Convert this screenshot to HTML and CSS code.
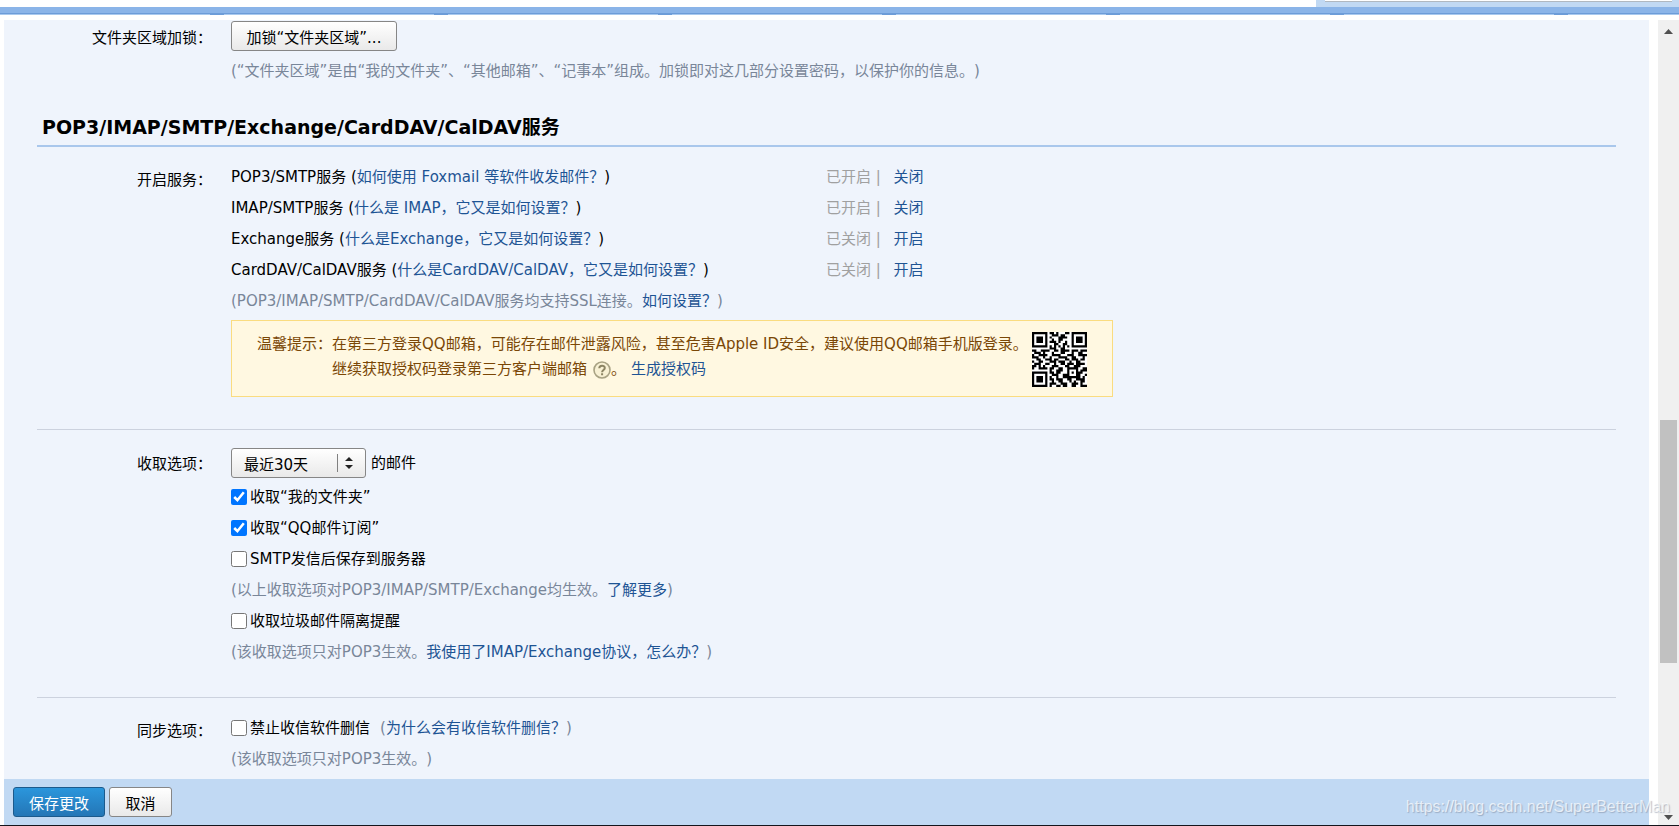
FILE: index.html
```html
<!DOCTYPE html>
<html lang="zh-CN">
<head>
<meta charset="utf-8">
<title>邮箱设置</title>
<link rel="stylesheet" href="styles.css">
</head>
<body>
<header class="topbar"><div class="searchwrap"><div class="searchbox"></div></div></header>
<div class="divider"></div>
<div class="tabs"></div>
<div class="frame">
  <main class="panel">
    <div class="settings">
      <section class="row row-lock">
        <div class="label">文件夹区域加锁：</div>
        <div class="content">
          <button class="btn lock" type="button">加锁“文件夹区域”...</button>
          <p class="line hint">(“文件夹区域”是由“我的文件夹”、“其他邮箱”、“记事本”组成。加锁即对这几部分设置密码，以保护你的信息。)</p>
        </div>
      </section>
      <h2 class="title">POP3/IMAP/SMTP/Exchange/CardDAV/CalDAV服务</h2>
      <section class="row row-services">
        <div class="label">开启服务：</div>
        <div class="content">
          <div class="line service"><span>POP3/SMTP服务 (<a href="#">如何使用 Foxmail 等软件收发邮件？</a>)</span><span class="state">已开启 | <a href="#">关闭</a></span></div>
          <div class="line service"><span>IMAP/SMTP服务 (<a href="#">什么是 IMAP，它又是如何设置？</a>)</span><span class="state">已开启 | <a href="#">关闭</a></span></div>
          <div class="line service"><span>Exchange服务 (<a href="#">什么是Exchange，它又是如何设置？</a>)</span><span class="state">已关闭 | <a href="#">开启</a></span></div>
          <div class="line service"><span>CardDAV/CalDAV服务 (<a href="#">什么是CardDAV/CalDAV，它又是如何设置？</a>)</span><span class="state">已关闭 | <a href="#">开启</a></span></div>
          <p class="line hint">(POP3/IMAP/SMTP/CardDAV/CalDAV服务均支持SSL连接。<a href="#">如何设置？</a>)</p>
          <div class="tip">
            <div>温馨提示：</div>
            <div class="tip-text">
              <div>在第三方登录QQ邮箱，可能存在邮件泄露风险，甚至危害Apple ID安全，建议使用QQ邮箱手机版登录。</div>
              <div class="tip-line">继续获取授权码登录第三方客户端邮箱
                <svg class="help" viewBox="0 0 18 18" width="18" height="18"><circle cx="9" cy="9" r="8" fill="#f8f1d4" stroke="#a8a283" stroke-width="1.600"/><path d="M6.300 7.200C6.300 3.800 11.800 3.900 11.800 7c0 2-2.700 2.100-2.700 4.200M9.100 12.300v2" fill="none" stroke="#8b8463" stroke-width="2"/></svg>。<a class="gen" href="#">生成授权码</a></div>
            </div>
            <svg class="qr" viewBox="0 0 25 25" width="55" height="55" role="img" aria-label="二维码"><path fill="#fff" d="M0 0h25v25H0z"/><path stroke="#000" d="M0 .5h7m1 0h2m1 0h1m3 0h2m1 0h7M0 1.500h1m5 0h1m2 0h3m1 0h2m3 0h1m5 0h1M0 2.500h1m1 0h3m1 0h1m1 0h1m3 0h4m2 0h1m1 0h3m1 0h1M0 3.500h1m1 0h3m1 0h1m2 0h1m2 0h2m4 0h1m1 0h3m1 0h1M0 4.500h1m1 0h3m1 0h1m1 0h3m1 0h1m2 0h1m2 0h1m1 0h3m1 0h1M0 5.500h1m5 0h1m3 0h2m2 0h2m2 0h1m5 0h1M0 6.500h7m1 0h1m1 0h1m1 0h1m1 0h1m1 0h1m1 0h7M8 7.500h3m2 0h2M0 8.500h2m2 0h4m2 0h2m1 0h4m1 0h3m1 0h3M1 9.500h3m1 0h1m3 0h1m3 0h2m3 0h1m2 0h2M0 10.500h1m2 0h4m2 0h4m3 0h3m2 0h4M0 11.500h3m2 0h1m2 0h1m3 0h4m2 0h2m3 0h1M2 12.500h2m2 0h3m1 0h2m3 0h2m1 0h3m1 0h2M0 13.500h1m2 0h2m3 0h3m1 0h3m2 0h1m2 0h2M1 14.500h3m2 0h2m2 0h1m2 0h2m1 0h3m1 0h4M0 15.500h2m1 0h1m1 0h1m3 0h3m3 0h2m2 0h3M0 16.500h1m2 0h4m1 0h2m2 0h2m2 0h5m2 0h2M8 17.500h1m2 0h3m2 0h1m3 0h1m1 0h3M0 18.500h7m1 0h2m1 0h2m3 0h1m1 0h1m1 0h3M0 19.500h1m5 0h1m2 0h3m2 0h3m3 0h2m2 0h1M0 20.500h1m1 0h3m1 0h1m1 0h1m2 0h1m2 0h8m1 0h1M0 21.500h1m1 0h3m1 0h1m1 0h2m1 0h3m2 0h2m2 0h4M0 22.500h1m1 0h3m1 0h1m2 0h1m2 0h2m3 0h1m1 0h1m2 0h2M0 23.500h1m5 0h1m1 0h3m2 0h3m2 0h3m1 0h1M0 24.500h7m1 0h1m2 0h2m1 0h2m2 0h2m2 0h3"/></svg>
          </div>
        </div>
      </section>
      <section class="row row-receive">
        <div class="label">收取选项：</div>
        <div class="content">
          <div class="selectline"><select class="btn select" aria-label="收取选项"><option>最近30天</option></select><svg class="arrows" viewBox="0 0 20 18" width="20" height="18"><path d="M.5 0v18" stroke="#808080"/><path d="M8 7l4-4 4 4zM8 11l4 4 4-4z" fill="#222"/></svg><span>的邮件</span></div>
          <label class="line check"><input type="checkbox" checked>收取“我的文件夹”</label>
          <label class="line check"><input type="checkbox" checked>收取“QQ邮件订阅”</label>
          <label class="line check"><input type="checkbox">SMTP发信后保存到服务器</label>
          <p class="line hint">(以上收取选项对POP3/IMAP/SMTP/Exchange均生效。<a href="#">了解更多</a>)</p>
          <label class="line check"><input type="checkbox">收取垃圾邮件隔离提醒</label>
          <p class="line hint">(该收取选项只对POP3生效。<a href="#">我使用了IMAP/Exchange协议，怎么办？</a>)</p>
        </div>
      </section>
      <section class="row row-sync">
        <div class="label">同步选项：</div>
        <div class="content">
          <div class="line check"><input id="sync" type="checkbox"><label for="sync">禁止收信软件删信</label><span class="hint why">(<a href="#">为什么会有收信软件删信？</a>)</span></div>
          <p class="line hint">(该收取选项只对POP3生效。)</p>
        </div>
      </section>
    </div>
    <footer class="actions">
      <button class="btn primary" type="button">保存更改</button>
      <button class="btn" type="button">取消</button>
    </footer>
  </main>
  <div class="scrollbar">
    <svg viewBox="0 0 9 5" width="9" height="5"><path d="M0 5L4.500 0 9 5z" fill="#505050"/></svg>
    <div class="track"><div class="thumb"></div></div>
    <svg viewBox="0 0 9 5" width="9" height="5"><path d="M0 0l4.500 5L9 0z" fill="#505050"/></svg>
  </div>
</div>
<div class="bottomline"></div>
<div class="watermark">https://blog.csdn.net/SuperBetterMan</div>
</body>
</html>
```

FILE: styles.css
```css
* { box-sizing: border-box; }
body {
  margin: 0;
  height: 100vh;
  overflow: hidden;
  display: flex;
  flex-direction: column;
  background: #fff;
  color: #000;
  font: 15px/20px "DejaVu Sans", "Noto Sans CJK SC", sans-serif;
  text-spacing-trim: space-all;
}
p, h2 { margin: 0; }
a { color: #1e5494; text-decoration: none; }
.topbar { display: flex; justify-content: flex-end; height: 7px; }
.searchwrap { width: 363px; padding: 0 7px 0 9px; background: #c1d9f3; }
.searchbox { height: 2px; background: #fff; border-bottom: 1px solid #b0b8c0; }
.divider { height: 7px; background: #8ab4e8; border-bottom: 1px solid #6c9cd8; }
.tabs {
  height: 1px;
  background: repeating-linear-gradient(90deg, #a9c9ee 0 210px, #6c9cd8 210px 224px);
}
.frame { flex: 1; min-height: 0; display: flex; padding: 5px 0 0 4px; }
.panel { flex: 1; min-width: 0; display: flex; flex-direction: column; background: #eff4fc; }
.settings { flex: 1; min-height: 0; overflow: hidden; padding: 0 33px; }
.row { display: flex; }
.label { width: 175px; padding-top: 7px; text-align: right; flex: none; }
.content { flex: 1; min-width: 0; padding-left: 19px; }
.line { display: flex; align-items: center; height: 31px; white-space: pre; }
.hint { color: #798699; }
.btn {
  height: 30px;
  min-width: 63px;
  padding: 4px 15px 0;
  border: 1px solid #868686;
  border-radius: 3px;
  background: linear-gradient(#fff, #e9e9e9);
  color: #000;
  font: inherit;
}
.row-lock { padding-top: 1px; }
.lock { display: block; width: 166px; margin-bottom: 4px; padding: 4px 0 0; }
.title {
  margin-top: 29px;
  padding: 0 0 6px 5px;
  border-bottom: 2px solid #a9c7ec;
  font-size: 19px;
  line-height: 24px;
}
.row-services { padding: 14px 0 32px; border-bottom: 1px solid #ccd2de; }
.row-services .label { padding-top: 9px; }
.service > span:first-child { width: 595px; }
.state { color: #a0a0a0; }
.state a { margin-left: 8px; }
.tip {
  display: flex;
  width: fit-content;
  margin-top: 4px;
  padding: 11px 25px 9px;
  border: 1px solid #fadc80;
  background: #fff8e1;
  color: #7a4706;
  line-height: 25px;
  white-space: nowrap;
}
.tip-line { display: flex; align-items: center; }
.help { margin-left: 6px; }
.gen { margin-left: 5px; }
.qr { margin-left: 4px; }
.row-receive { padding: 17px 0 30px; border-bottom: 1px solid #ccd2de; }
.selectline { display: flex; align-items: center; height: 32px; margin-bottom: 2px; }
.select { width: 135px; padding: 3px 12px 0; appearance: none; }
.arrows { margin: 0 14px 0 -29px; pointer-events: none; }
.check input { width: 16px; height: 16px; margin: 0 3px 0 0; }
.row-sync { padding-top: 14px; }
.row-sync .label { padding-top: 9px; }
.why { margin-left: 10px; }
.actions { display: flex; gap: 4px; height: 46px; padding: 8px 9px; background: #c1d9f3; }
.primary { border-color: #1c5a8c; background: linear-gradient(#2b96dc, #2476b6); color: #fff; }
.scrollbar {
  width: 21px;
  margin-left: 9px;
  padding: 9px 0 5px;
  display: flex;
  flex-direction: column;
  align-items: center;
  background: #f0f0f0;
}
.track { flex: 1; width: 17px; display: flex; flex-direction: column; }
.track::before { content: ""; flex: 386; }
.track::after { content: ""; flex: 152; }
.thumb { flex: 243; background: #c1c1c1; }
.bottomline { height: 1px; background: #15151c; }
.watermark {
  position: absolute;
  right: 9px;
  bottom: 9px;
  color: rgba(255, 255, 255, .7);
  font: 16px/20px "Liberation Sans", sans-serif;
  text-shadow: 1px 1px 1px rgba(120, 130, 150, .5);
}
```
